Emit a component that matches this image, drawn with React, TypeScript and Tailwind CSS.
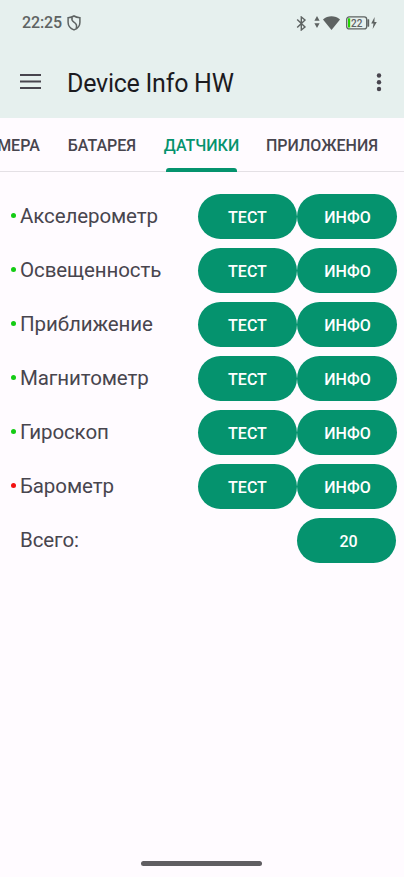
import { useState } from "react";
import clsx from "clsx";

interface Sensor {
  name: string;
  available: boolean;
}

const sensors: Sensor[] = [
  { name: "Акселерометр", available: true },
  { name: "Освещенность", available: true },
  { name: "Приближение", available: true },
  { name: "Магнитометр", available: true },
  { name: "Гироскоп", available: true },
  { name: "Барометр", available: false },
];

const tabs = [
  { label: "КАМЕРА", className: "w-[95px] pl-[5px]" },
  { label: "БАТАРЕЯ", className: "w-[98px]" },
  { label: "ДАТЧИКИ", className: "w-[101px]" },
  { label: "ПРИЛОЖЕНИЯ", className: "w-[140px]" },
];

const StatusBar = () => (
  <div className="flex h-[46px] items-center justify-between pl-[22px] pr-[27px] text-[#5e6362]">
    <div className="flex items-center">
      <span className="w-[44px] text-[16px] font-medium leading-none tracking-[-0.1px]">
        22:25
      </span>
      <svg className="ml-px h-4 w-[14px]" viewBox="0 0 14 16" fill="none" stroke="currentColor" strokeWidth="1.5">
        <path d="M7 1C5.3 2.1 3.2 2.6 1.1 2.8v4.6c0 3.3 2.4 6 5.9 7.5 3.5-1.5 5.9-4.2 5.9-7.5V2.8C10.8 2.6 8.7 2.1 7 1z" />
        <path d="M5.2 2.2c-.8 2.2-.3 3.6 1.7 4.9 2.4 1.5 3.3 3.5 2.3 6" />
      </svg>
    </div>
    <div className="flex items-center">
      {/* Bluetooth */}
      <svg className="h-[15px] w-[11px]" viewBox="0 0 11 15" fill="none" stroke="currentColor" strokeWidth="1.4">
        <path d="M1.2 3.5l7.8 7.5-3.7 3V1L9 4l-7.8 7.5" />
      </svg>
      {/* Data up / down */}
      <svg className="ml-[7px] mb-[2px] h-3 w-[6px]" viewBox="0 0 6 12" fill="currentColor">
        <path d="M3 0l2.6 4.7H.4zM3 12L.4 7.3h5.2z" />
      </svg>
      <svg className="ml-[3px] h-[14px] w-[17px]" viewBox="0 0 17 14" fill="currentColor">
        <path d="M0 3.5C4.8-.8 12.2-.8 17 3.5L8.5 14z" />
      </svg>
      <svg className="ml-[6px] h-[14px] w-[24px]" viewBox="0 0 24 14">
        <rect x=".7" y=".9" width="20" height="12" rx="2.5" fill="none" stroke="currentColor" strokeWidth="1.3" />
        <rect x="2" y="2.3" width="2.2" height="9.2" fill="#22d400" />
        <rect x="21.4" y="3.2" width="1.8" height="7.5" rx=".6" fill="currentColor" />
        <text x="10.8" y="10.6" textAnchor="middle" fontSize="10" fontWeight="500" fill="currentColor">
          22
        </text>
      </svg>
      <svg className="ml-px h-3 w-[6px]" viewBox="0 0 6 12" fill="currentColor">
        <path d="M3.6 0L.2 6.5h2.3L1.7 12 5.8 5H3.4z" />
      </svg>
    </div>
  </div>
);

const App = () => {
  const [activeTab, setActiveTab] = useState("ДАТЧИКИ");

  return (
    <div className="flex h-[877px] w-[404px] flex-col overflow-hidden bg-[#fffbff] font-['Roboto',sans-serif] text-[#48454e]">
      <header className="h-[118px] shrink-0 bg-[#e6f0ee]">
        <StatusBar />
        <div className="flex h-[72px] items-center pl-5 pr-[22px]">
          <button aria-label="Меню" className="-mt-px">
            <svg className="h-[15px] w-[21px]" viewBox="0 0 21 15" fill="currentColor">
              <path d="M0 0h21v2H0zM0 6.5h21v2H0zM0 13h21v2H0z" />
            </svg>
          </button>
          <h1 className="ml-[26px] mt-[2px] flex-1 text-[25px] leading-none tracking-[-0.24px] text-[#1c1b1f]">
            Device Info HW
          </h1>
          <button aria-label="Ещё">
            <svg className="h-[19px] w-[6px]" viewBox="0 0 6 19" fill="currentColor">
              <circle cx="3" cy="2.5" r="2.2" />
              <circle cx="3" cy="9.2" r="2.2" />
              <circle cx="3" cy="16" r="2.2" />
            </svg>
          </button>
        </div>
      </header>

      <nav className="flex h-[54px] shrink-0 border-b border-[#e4e0e5]">
        <div className="-ml-[42px] flex">
          {tabs.map((tab) => (
            <button
              key={tab.label}
              onClick={() => setActiveTab(tab.label)}
              className={clsx(
                "relative flex shrink-0 items-center justify-center pt-[2px] text-[16px] font-medium whitespace-nowrap",
                tab.className,
                activeTab === tab.label && "text-[#05936e]"
              )}
            >
              {tab.label}
              {activeTab === tab.label && (
                <span className="absolute inset-x-[15px] -bottom-px h-[4px] rounded-t-[3px] bg-[#05936e]" />
              )}
            </button>
          ))}
        </div>
      </nav>

      <main className="flex flex-1 flex-col gap-[9px] pl-[11px] pr-[7px] pt-[22px]">
        {sensors.map((sensor) => (
          <div key={sensor.name} className="flex h-[45px] items-center">
            <span
              className={clsx(
                "mb-[2px] size-[5px] rounded-full",
                sensor.available ? "bg-[#14cc14]" : "bg-[#f31111]"
              )}
            />
            <span className="ml-1 flex-1 text-[20.5px] leading-none tracking-[-0.1px]">
              {sensor.name}
            </span>
            <button className="h-[45px] w-[99px] rounded-full bg-[#05936e] pt-[3px] text-[16px] font-medium text-white">
              ТЕСТ
            </button>
            <button className="h-[45px] w-[100px] rounded-full bg-[#05936e] pl-px pt-[3px] text-[16px] font-medium text-white">
              ИНФО
            </button>
          </div>
        ))}
        <div className="flex h-[45px] items-center pl-[9px] pr-px">
          <span className="flex-1 text-[20.5px] leading-none tracking-[-0.1px]">Всего:</span>
          <button className="h-[45px] w-[99px] rounded-full bg-[#05936e] pl-1 pt-[3px] text-[16px] font-medium text-white">
            20
          </button>
        </div>
      </main>

      <div className="flex h-[16px] shrink-0 justify-center">
        <div className="mr-px h-[5px] w-[121px] rounded-full bg-[#605e62]" />
      </div>
    </div>
  );
};

export default App;
